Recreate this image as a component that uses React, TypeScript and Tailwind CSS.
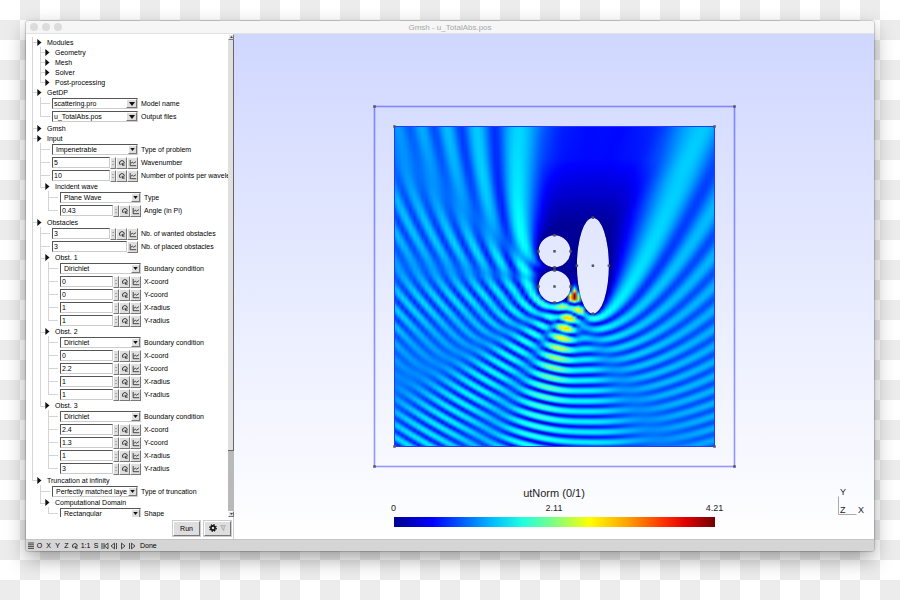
import React, { useId } from 'react';

type Field = {
  kind: 'combo' | 'choice' | 'number' | 'readonly';
  label: string;
  value: string;
};

type Group = {
  kind: 'group';
  label: string;
  children?: TreeNode[];
};

type TreeNode = Field | Group;

const obstacle = (index: number, x: string, y: string, rx: string, ry: string): Group => ({
  kind: 'group',
  label: `Obst. ${index}`,
  children: [
    { kind: 'choice', label: 'Boundary condition', value: 'Dirichlet' },
    { kind: 'number', label: 'X-coord', value: x },
    { kind: 'number', label: 'Y-coord', value: y },
    { kind: 'number', label: 'X-radius', value: rx },
    { kind: 'number', label: 'Y-radius', value: ry },
  ],
});

const TREE: TreeNode[] = [
  {
    kind: 'group',
    label: 'Modules',
    children: [
      { kind: 'group', label: 'Geometry' },
      { kind: 'group', label: 'Mesh' },
      { kind: 'group', label: 'Solver' },
      { kind: 'group', label: 'Post-processing' },
    ],
  },
  {
    kind: 'group',
    label: 'GetDP',
    children: [
      { kind: 'combo', label: 'Model name', value: 'scattering.pro' },
      { kind: 'combo', label: 'Output files', value: 'u_TotalAbs.pos' },
    ],
  },
  { kind: 'group', label: 'Gmsh' },
  {
    kind: 'group',
    label: 'Input',
    children: [
      { kind: 'choice', label: 'Type of problem', value: 'Impenetrable' },
      { kind: 'number', label: 'Wavenumber', value: '5' },
      { kind: 'number', label: 'Number of points per wavelength', value: '10' },
      {
        kind: 'group',
        label: 'Incident wave',
        children: [
          { kind: 'choice', label: 'Type', value: 'Plane Wave' },
          { kind: 'number', label: 'Angle (in Pi)', value: '0.43' },
        ],
      },
    ],
  },
  {
    kind: 'group',
    label: 'Obstacles',
    children: [
      { kind: 'number', label: 'Nb. of wanted obstacles', value: '3' },
      { kind: 'readonly', label: 'Nb. of placed obstacles', value: '3' },
      obstacle(1, '0', '0', '1', '1'),
      obstacle(2, '0', '2.2', '1', '1'),
      obstacle(3, '2.4', '1.3', '1', '3'),
    ],
  },
  {
    kind: 'group',
    label: 'Truncation at infinity',
    children: [
      { kind: 'choice', label: 'Type of truncation', value: 'Perfectly matched layer' },
      {
        kind: 'group',
        label: 'Computational Domain',
        children: [{ kind: 'choice', label: 'Shape', value: 'Rectangular' }],
      },
    ],
  },
];

/* ---------- Scattering solver ---------- */

const K = 5;
const ANGLE = 0.43 * Math.PI;
const UNIT = 16; // pixels per length unit
const HALF = 10; // half side of the domain
const MAX_NORM = 4.21;

const OBSTACLES = [
  { x: 0, y: 0, rx: 1, ry: 1, n: 56 },
  { x: 0, y: 2.2, rx: 1, ry: 1, n: 56 },
  { x: 2.4, y: 1.3, rx: 1, ry: 3, n: 104 },
];

// H0 = J0 + i Y0, rational approximations
function hankel(x: number): [number, number] {
  if (x < 8) {
    const y = x * x;
    const j =
      (57568490574 + y * (-13362590354 + y * (651619640.7 + y * (-11214424.18 + y * (77392.33017 - y * 184.9052456))))) /
      (57568490411 + y * (1029532985 + y * (9494680.718 + y * (59272.64853 + y * (267.8532712 + y)))));
    const a =
      (-2957821389 + y * (7062834065 + y * (-512359803.6 + y * (10879881.29 + y * (-86327.92757 + y * 228.4622733))))) /
      (40076544269 + y * (745249964.8 + y * (7189466.438 + y * (47447.2647 + y * (226.1030244 + y)))));
    return [j, a + 0.636619772 * j * Math.log(x)];
  }
  const z = 8 / x;
  const y = z * z;
  const p = 1 + y * (-0.1098628627e-2 + y * (0.2734510407e-4 + y * (-0.2073370639e-5 + y * 0.2093887211e-6)));
  const q = -0.1562499995e-1 + y * (0.1430488765e-3 + y * (-0.6911147651e-5 + y * (0.7621095161e-6 - y * 0.934935152e-7)));
  const s = Math.sqrt(0.636619772 / x);
  const c = Math.cos(x - 0.785398164);
  const d = Math.sin(x - 0.785398164);
  return [s * (c * p - z * d * q), s * (d * p + z * c * q)];
}

// Point sources slightly inside every obstacle, total field zero on the walls
function solveSources() {
  const wall: number[][] = [];
  const src: number[][] = [];
  OBSTACLES.forEach((o) => {
    for (let i = 0; i < o.n; i++) {
      const t = (2 * Math.PI * i) / o.n;
      const c = Math.cos(t);
      const s = Math.sin(t);
      const len = Math.hypot(c / o.rx, s / o.ry);
      const x = o.x + o.rx * c;
      const y = o.y + o.ry * s;
      wall.push([x, y]);
      src.push([x - (0.18 * c) / o.rx / len, y - (0.18 * s) / o.ry / len]);
    }
  });
  const n = wall.length;
  const re: Float64Array[] = [];
  const im: Float64Array[] = [];
  for (let i = 0; i < n; i++) {
    re.push(new Float64Array(n + 1));
    im.push(new Float64Array(n + 1));
    for (let j = 0; j < n; j++) {
      const h = hankel(K * Math.hypot(wall[i][0] - src[j][0], wall[i][1] - src[j][1]));
      re[i][j] = h[0];
      im[i][j] = h[1];
    }
    const phase = K * (Math.cos(ANGLE) * wall[i][0] + Math.sin(ANGLE) * wall[i][1]);
    re[i][n] = -Math.cos(phase);
    im[i][n] = -Math.sin(phase);
  }
  for (let p = 0; p < n; p++) {
    let best = p;
    for (let i = p + 1; i < n; i++) {
      if (Math.hypot(re[i][p], im[i][p]) > Math.hypot(re[best][p], im[best][p])) best = i;
    }
    [re[p], re[best]] = [re[best], re[p]];
    [im[p], im[best]] = [im[best], im[p]];
    const d = re[p][p] ** 2 + im[p][p] ** 2;
    for (let i = p + 1; i < n; i++) {
      const fr = (re[i][p] * re[p][p] + im[i][p] * im[p][p]) / d;
      const fi = (im[i][p] * re[p][p] - re[i][p] * im[p][p]) / d;
      for (let j = p; j <= n; j++) {
        re[i][j] -= fr * re[p][j] - fi * im[p][j];
        im[i][j] -= fr * im[p][j] + fi * re[p][j];
      }
    }
  }
  const out: number[][] = new Array(n);
  for (let i = n - 1; i >= 0; i--) {
    let r = re[i][n];
    let m = im[i][n];
    for (let j = i + 1; j < n; j++) {
      r -= re[i][j] * out[j][2] - im[i][j] * out[j][3];
      m -= re[i][j] * out[j][3] + im[i][j] * out[j][2];
    }
    const d = re[i][i] ** 2 + im[i][i] ** 2;
    out[i] = [src[i][0], src[i][1], (r * re[i][i] + m * im[i][i]) / d, (m * re[i][i] - r * im[i][i]) / d];
  }
  return out;
}

function jet(v: number) {
  const x = Math.min(1, Math.max(0.01, v));
  const ch = (c: number) => Math.round(255 * Math.min(1, Math.max(0, 1.55 - Math.abs(4 * x - c))));
  return `rgb(${ch(3)},${ch(2)},${ch(1)})`;
}

const STEP = 4;
const SIZE = 2 * HALF * UNIT;

function computeRows() {
  const sources = solveSources();
  const table: [number, number][] = [];
  for (let i = 0; i <= 16000; i++) table.push(hankel(Math.max(i, 1) / 100));
  const rows: string[][] = [];
  for (let py = 0; py < SIZE; py++) {
    const row: string[] = [];
    const y = HALF - (py + 0.5) / UNIT;
    const residual = 0.5 * Math.min(1, Math.max(0, (y - 3.5) / 4.5));
    for (let px = 0; px <= SIZE; px += STEP) {
      const x = px / UNIT - HALF;
      const phase = K * (Math.cos(ANGLE) * x + Math.sin(ANGLE) * y);
      let r = Math.cos(phase);
      let m = Math.sin(phase);
      for (const s of sources) {
        const dx = x - s[0];
        const dy = y - s[1];
        const at = K * 100 * Math.sqrt(dx * dx + dy * dy);
        const lo = Math.floor(at);
        const f = at - lo;
        const a = table[lo];
        const b = table[lo + 1];
        const hr = a[0] + f * (b[0] - a[0]);
        const hi = a[1] + f * (b[1] - a[1]);
        r += s[2] * hr - s[3] * hi;
        m += s[2] * hi + s[3] * hr;
      }
      // the extended field inside an obstacle has no meaning
      const inside = OBSTACLES.some((o) => ((x - o.x) / o.rx) ** 2 + ((y - o.y) / o.ry) ** 2 < 0.98);
      const norm = Math.hypot(r, m);
      const shadow = x > -1.5 && x < 8 ? residual : 0;
      row.push(jet(inside ? 0 : Math.max(norm, Math.hypot(norm * 0.8, shadow)) / MAX_NORM));
    }
    rows.push(row);
  }
  return rows;
}

const ROWS = computeRows();
const EDGE = SIZE / 2;

const ellipsePath = (o: (typeof OBSTACLES)[number]) => {
  const rx = o.rx * UNIT;
  const ry = o.ry * UNIT;
  return `M${o.x * UNIT - rx} ${-o.y * UNIT}a${rx} ${ry} 0 1 0 ${2 * rx} 0a${rx} ${ry} 0 1 0 ${-2 * rx} 0z`;
};

const POINTS: number[][] = [
  ...[180, 160].flatMap((d) => [[-d, -d], [d, -d], [-d, d], [d, d]]),
  ...OBSTACLES.flatMap((o) =>
    [[0, 0], [1, 0], [-1, 0], [0, 1], [0, -1]].map(([a, b]) => [(o.x + a * o.rx) * UNIT, -(o.y + b * o.ry) * UNIT]),
  ),
];

const FieldPlot = React.memo(() => (
  <svg className="w-[368px] h-[368px] shrink-0" viewBox="-184.5 -184.5 368 368" role="img" aria-label="utNorm">
    <defs>
      <clipPath id="domain">
        <path
          clipRule="evenodd"
          d={`M${-EDGE} ${-EDGE}H${EDGE}V${EDGE}H${-EDGE}z${OBSTACLES.map(ellipsePath).join('')}`}
        />
      </clipPath>
      {ROWS.map((row, y) => (
        <linearGradient key={y} id={`row-${y}`}>
          {row.map((color, i) => (
            <stop key={i} offset={(i * STEP) / SIZE} stopColor={color} />
          ))}
        </linearGradient>
      ))}
    </defs>
    <g clipPath="url(#domain)">
      {ROWS.map((_, y) => (
        <rect key={y} x={-EDGE} y={y - EDGE} width={SIZE} height={1.5} fill={`url(#row-${y})`} />
      ))}
    </g>
    <rect x={-160} y={-160} width={320} height={320} fill="none" stroke="#2438ff" />
    <rect x={-180} y={-180} width={360} height={360} fill="none" stroke="#0000ff" strokeOpacity={0.4} strokeWidth={1.6} />
    {POINTS.map(([x, y], i) => (
      <rect key={i} x={x - 1.25} y={y - 1.25} width={2.5} height={2.5} fill="#555" />
    ))}
  </svg>
));

/* ---------- Option tree ---------- */

const ReloadIcon = () => (
  <svg viewBox="0 0 8 8" className="w-2 h-2" fill="none" stroke="#111" strokeWidth="0.9">
    <path d="M2.6 6A2.4 2.4 0 1 1 6.2 3.2Q6.2 4.4 5 5.4" />
    <path d="M4.2 3.9v2.2h2.4" />
  </svg>
);

const GraphIcon = () => (
  <svg viewBox="0 0 8 8" className="w-2 h-2" fill="none" stroke="#222" strokeWidth="0.8">
    <path d="M1.2 1v5.7h6" />
    <path d="M1.6 4.6l1.6-1.4 1.4 1 2.4-1.6" />
  </svg>
);

const raised = 'bg-[#dedede] border border-t-white border-l-white border-r-[#777] border-b-[#777]';
const sunken = 'bg-white border border-t-[#555] border-l-[#555] border-r-[#ccc] border-b-[#ccc]';

const SmallButton = ({ title, children }: { title: string; children: React.ReactNode }) => (
  <button title={title} className={`${raised} w-[11px] h-3 flex shrink-0 items-center justify-center`}>
    {children}
  </button>
);

const FieldRow = ({ field, depth }: { field: Field; depth: number }) => {
  const id = useId();
  const isSelect = field.kind === 'combo' || field.kind === 'choice';
  return (
    <div className="h-[13px] pl-3 flex items-center gap-[3px]">
      <div className={`${depth > 1 ? 'w-[81px]' : 'w-[86px]'} flex shrink-0 items-center`}>
        {isSelect ? (
          <div className="relative w-full h-[11px]">
            <select
              id={id}
              className={`${sunken} ${field.kind === 'combo' ? 'pl-px' : 'pl-[3px]'} block w-full h-[11px] pr-[10px] border-r-[#555] border-b-[#777] leading-[9px] appearance-none overflow-hidden`}
            >
              <option>{field.value}</option>
            </select>
            <span
              className={`${raised} ${field.kind === 'combo' ? 'w-[11px]' : 'w-[9px]'} absolute right-px top-px h-[9px] flex items-center justify-center pointer-events-none`}
            >
              <svg viewBox="0 0 6 4" className={field.kind === 'combo' ? 'w-[6px] h-1' : 'w-[5px] h-[3px]'}>
                <path d="M0 0h6L3 4z" fill="#111" />
              </svg>
            </span>
          </div>
        ) : (
          <>
            <input
              id={id}
              defaultValue={field.value}
              readOnly={field.kind === 'readonly'}
              className={`${sunken} pl-px min-w-0 flex-1 h-[11px] leading-[9px] outline-none`}
            />
            {field.kind === 'number' && (
              <>
                <button title="Step" className={`${raised} w-[6px] h-3 flex shrink-0 items-center justify-center leading-none`}>
                  :
                </button>
                <SmallButton title="Loop">
                  <ReloadIcon />
                </SmallButton>
              </>
            )}
            <SmallButton title="Graph">
              <GraphIcon />
            </SmallButton>
          </>
        )}
      </div>
      <label htmlFor={id} className="whitespace-nowrap">
        {field.label}
      </label>
    </div>
  );
};

const GroupHeader = ({ group, depth }: { group: Group; depth: number }) => (
  <button
    className={`${depth > 0 && group.children ? 'h-[9px]' : 'h-[10px]'} pl-[5px] flex items-center gap-[5px] whitespace-nowrap`}
  >
    <svg viewBox="0 0 5 7" className="w-[5px] h-[7px]">
      <path d="M0.3 0l4.2 3.5L0.3 7z" fill="#111" />
    </svg>
    {group.label}
  </button>
);

const guide =
  "relative before:content-[''] before:absolute before:left-0 before:top-0 before:w-px before:bg-[#d4d4d4] after:content-[''] after:absolute after:left-0 after:h-px after:bg-[#d4d4d4]";

const Branch = ({ nodes, depth }: { nodes: TreeNode[]; depth: number }) => (
  <ul className={depth ? 'ml-2' : 'ml-[6px]'}>
    {nodes.map((node, i) => (
      <li
        key={i}
        className={`${guide} ${i === nodes.length - 1 ? 'before:h-[6px]' : 'before:h-full'} ${
          node.kind === 'group' ? 'after:w-[5px] after:top-[5px]' : 'after:w-[10px] after:top-[6px]'
        }`}
      >
        {node.kind === 'group' ? (
          <>
            <GroupHeader group={node} depth={depth} />
            {node.children && <Branch nodes={node.children} depth={depth + 1} />}
          </>
        ) : (
          <FieldRow field={node} depth={depth} />
        )}
      </li>
    ))}
  </ul>
);

const Scrollbar = () => (
  <div className="w-[6px] shrink-0 flex flex-col bg-[#b9b9b9]">
    <button title="Scroll up" className={`${raised} h-[6px] flex items-center justify-center`}>
      <svg viewBox="0 0 4 2" className="w-[3px] h-[2px]">
        <path d="M0 2h4L2 0z" fill="#111" />
      </svg>
    </button>
    <div className="h-[85%] bg-[#e0e0e0] border-r border-b border-[#666]"></div>
    <div className="flex-1"></div>
    <button title="Scroll down" className={`${raised} h-[6px] flex items-center justify-center`}>
      <svg viewBox="0 0 4 2" className="w-[3px] h-[2px]">
        <path d="M0 0h4L2 2z" fill="#111" />
      </svg>
    </button>
  </div>
);

const Sidebar = () => (
  <aside className="w-[208px] shrink-0 flex flex-col bg-white">
    <div className="flex-1 min-h-0 flex">
      <div className="flex-1 min-w-0 pt-[3px] overflow-hidden">
        <Branch nodes={TREE} depth={0} />
      </div>
      <Scrollbar />
    </div>
    <div className="h-[22px] shrink-0 pr-[2px] flex items-center justify-end gap-1 border-r border-[#ccc]">
      <button className={`${raised} w-[27px] h-[15px] shadow-[0_0_0_1px_#ccc]`}>Run</button>
      <button title="Options" className={`${raised} w-[27px] h-[15px] flex items-center justify-center gap-[3px] shadow-[0_0_0_1px_#ccc]`}>
        <svg viewBox="0 0 10 10" className="w-2 h-2">
          <circle cx="5" cy="5" r="2.6" fill="none" stroke="#111" strokeWidth="2" />
          <circle cx="5" cy="5" r="4.1" fill="none" stroke="#111" strokeWidth="1.6" strokeDasharray="1.6 1.62" />
        </svg>
        <svg viewBox="0 0 6 6" className="w-[6px] h-[6px]">
          <path d="M0.5 0.5h5L4 3v2.6L3 5z" fill="#ccc" stroke="#999" strokeWidth="0.5" />
        </svg>
      </button>
    </div>
  </aside>
);

const Legend = () => (
  <div className="w-[357px] mt-4 flex flex-col text-[9px] leading-[12px] text-[#222]">
    <div className="text-[11px] leading-[15px] text-center">utNorm (0/1)</div>
    <div className="mt-px flex justify-between">
      <span className="w-9 text-center">0</span>
      <span className="w-9 text-center">2.11</span>
      <span className="w-9 text-center">4.21</span>
    </div>
    <div className="mt-[3px] mx-[18px] h-[10px] bg-[linear-gradient(to_right,#00008f,#0000ff_12%,#00bfff_31%,#20ffdf_40%,#80ff80_50%,#ffff00_61%,#ff9f00_73%,#ff3000_84%,#df0000_91%,#700000)]"></div>
  </div>
);

const Axes = () => (
  <svg
    className="absolute right-[7px] bottom-[20px] w-[30px] h-[32px] text-[9px]"
    viewBox="0 0 30 32"
    fontFamily="Liberation Sans, sans-serif"
  >
    <path d="M1.5 9.5v18h18" fill="none" stroke="#aaa" />
    <g fill="#222">
      <text x="3" y="8">Y</text>
      <text x="3" y="26">Z</text>
      <text x="21" y="26">X</text>
    </g>
  </svg>
);

const PLAYBACK = [
  { title: 'Rewind', d: 'M1 1v6M3 1v6M7 1.2v5.6L3.4 4z' },
  { title: 'Step back', d: 'M4.5 1.2v5.6L1 4zM6.5 1v6' },
  { title: 'Play', d: 'M2.5 1.2v5.6L6 4z' },
  { title: 'Step forward', d: 'M1.5 1v6M3.5 1.2v5.6L7 4z' },
];

const StatusBar = () => (
  <footer className="h-3 shrink-0 pl-px flex items-center bg-[#d5d5d5] border-t border-[#c4c4c4]">
    <button title="Menu" className="w-2 flex justify-center">
      <svg viewBox="0 0 6 7" className="w-[6px] h-[7px]" stroke="#222" strokeWidth="0.8">
        <path d="M0 1h6M0 2.8h6M0 4.6h6M0 6.4h6" />
      </svg>
    </button>
    {['O', 'X', 'Y', 'Z'].map((axis) => (
      <button key={axis} className="w-[9px] text-center">
        {axis}
      </button>
    ))}
    <button title="Rotate" className="w-[7px]">
      <ReloadIcon />
    </button>
    <button className="w-[15px] text-center">1:1</button>
    <button className="w-[6px] text-center">S</button>
    <div className="ml-[2px] flex gap-px">
      {PLAYBACK.map(({ title, d }) => (
        <button key={title} title={title}>
          <svg viewBox="0 0 8 8" className="w-2 h-2" fill="none" stroke="#222" strokeWidth="0.8">
            <path d={d} />
          </svg>
        </button>
      ))}
    </div>
    <span className="ml-1">Done</span>
  </footer>
);

const App: React.FC = () => {
  return (
    <div className="h-screen w-full pt-[21px] px-[26px] pb-[49px] flex bg-[conic-gradient(#ececec_25%,#fff_0_50%,#ececec_0_75%,#fff_0)] [background-size:40px_40px] font-['Liberation_Sans',sans-serif] text-[7px] leading-[9px] text-black">
      <div className="flex-1 min-w-0 flex flex-col rounded-[3px] overflow-hidden shadow-[0_0_1px_1px_rgba(0,0,0,0.18),0_8px_20px_rgba(0,0,0,0.35)]">
        {/* Title bar */}
        <header className="h-[13px] shrink-0 px-1 flex items-center bg-[#f6f6f6] border-b border-[#e2e2e2]">
          <div className="flex-1 flex gap-1">
            <button title="Close" className="size-2 rounded-full bg-[#dcdcdc]"></button>
            <button title="Minimize" className="size-2 rounded-full bg-[#dcdcdc]"></button>
            <button title="Zoom" className="size-2 rounded-full bg-[#dcdcdc]"></button>
          </div>
          <h1 className="text-[8px] text-[#a6a6a6]">Gmsh - u_TotalAbs.pos</h1>
          <div className="flex-1"></div>
        </header>

        {/* Options and graphics */}
        <div className="flex-1 min-h-0 flex">
          <Sidebar />
          <main className="relative flex-1 min-w-0 pt-[68px] flex flex-col items-center overflow-hidden bg-linear-to-b from-[#d0d7ff] to-white">
            <FieldPlot />
            <Legend />
            <Axes />
          </main>
        </div>

        <StatusBar />
      </div>
    </div>
  );
};

export default App;
